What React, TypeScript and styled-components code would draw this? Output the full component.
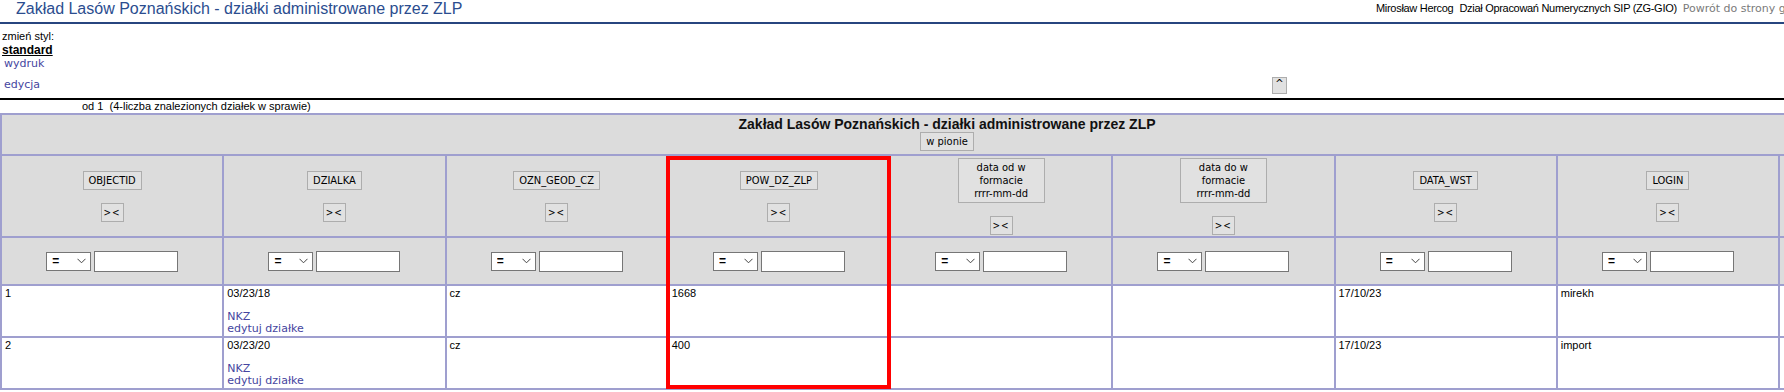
import React from "react";
import styled, { createGlobalStyle } from "styled-components";

const GlobalStyle = createGlobalStyle`
  html, body {
    margin: 0;
    padding: 0;
    overflow: hidden;
    background: #fff;
  }
  body {
    font-family: "Liberation Sans", Arial, sans-serif;
    font-size: 11px;
    color: #000;
  }
`;

type Column = { label: string[]; width: number; empty?: boolean };

const columns: Column[] = [
  { label: ["OBJECTID"], width: 222.25 },
  { label: ["DZIALKA"], width: 222.25 },
  { label: ["OZN_GEOD_CZ"], width: 222.25 },
  { label: ["POW_DZ_ZLP"], width: 222.25 },
  { label: ["data od w", "formacie", "rrrr-mm-dd"], width: 222.25 },
  { label: ["data do w", "formacie", "rrrr-mm-dd"], width: 222.25 },
  { label: ["DATA_WST"], width: 222.25 },
  { label: ["LOGIN"], width: 222.25 },
  { label: [""], width: 114, empty: true },
];

type Row = {
  id: string;
  date: string;
  geod: string;
  area: string;
  created: string;
  login: string;
};

const rows: Row[] = [
  { id: "1", date: "03/23/18", geod: "cz", area: "1668", created: "17/10/23", login: "mirekh" },
  { id: "2", date: "03/23/20", geod: "cz", area: "400", created: "17/10/23", login: "import" },
];

export default function App() {
  return (
    <Page>
      <GlobalStyle />
      <Header>
        <Title>Zakład Lasów Poznańskich - działki administrowane przez ZLP</Title>
        <UserBar>
          <span>Mirosław Hercog</span>
          <span>Dział Opracowań Numerycznych SIP (ZG-GIO)</span>
          <HomeLink href="#">Powrót do strony głównej</HomeLink>
        </UserBar>
      </Header>

      <StylePanel>
        <div>zmień styl:</div>
        <CurrentStyle>standard</CurrentStyle>
        <StyleLink href="#">wydruk</StyleLink>
        <EditRow>
          <StyleLink href="#">edycja</StyleLink>
          <CollapseButton>^</CollapseButton>
        </EditRow>
      </StylePanel>

      <Divider />
      <Count>od 1&nbsp; (4-liczba znalezionych działek w sprawie)</Count>

      <TableWrap>
        <Table>
          <colgroup>
            {columns.map((c, i) => (
              <col key={i} style={{ width: c.width }} />
            ))}
          </colgroup>
          <tbody>
            <tr>
              <TitleCell colSpan={columns.length}>
                <TableHeading>Zakład Lasów Poznańskich - działki administrowane przez ZLP</TableHeading>
                <ColumnButton>w pionie</ColumnButton>
              </TitleCell>
            </tr>
            <tr>
              {columns.map((c, i) => (
                <HeadCell key={i}>
                  {!c.empty && (
                    <HeadStack>
                      <ColumnButton $wide={c.label.length > 1}>
                        {c.label.map((line, j) => (
                          <ButtonLine key={j}>{line}</ButtonLine>
                        ))}
                      </ColumnButton>
                      <SortButton>&gt;&lt;</SortButton>
                    </HeadStack>
                  )}
                </HeadCell>
              ))}
            </tr>
            <tr>
              {columns.map((c, i) => (
                <FilterCell key={i}>
                  {!c.empty && (
                    <FilterGroup>
                      <SelectBox>
                        <Select defaultValue="=">
                          <option value="=">=</option>
                          <option value="<">&lt;</option>
                          <option value=">">&gt;</option>
                        </Select>
                        <svg width="9" height="6" viewBox="0 0 9 6">
                          <polyline points="0.5,0.8 4.5,4.8 8.5,0.8" fill="none" stroke="#444" strokeWidth="1" />
                        </svg>
                      </SelectBox>
                      <TextInput type="text" />
                    </FilterGroup>
                  )}
                </FilterCell>
              ))}
            </tr>
            {rows.map((r) => (
              <tr key={r.id}>
                <DataCell>{r.id}</DataCell>
                <DataCell>
                  <div>{r.date}</div>
                  <Blank />
                  <CellLink href="#">NKZ</CellLink>
                  <CellLink href="#">edytuj działke</CellLink>
                </DataCell>
                <DataCell>{r.geod}</DataCell>
                <DataCell>{r.area}</DataCell>
                <DataCell />
                <DataCell />
                <DataCell>{r.created}</DataCell>
                <DataCell>{r.login}</DataCell>
                <DataCell />
              </tr>
            ))}
          </tbody>
        </Table>
        <Highlight />
      </TableWrap>
    </Page>
  );
}

const Page = styled.div`
  width: 1892px;
`;

const Header = styled.div`
  display: grid;
  grid-template-columns: 1376px auto;
  height: 22px;
  border-bottom: 2px solid #27457f;
`;

const Title = styled.h1`
  margin: 0;
  padding: 1px 0 0 16px;
  font: 400 16px/16px "Liberation Sans", Arial, sans-serif;
  color: #2b4d8f;
  white-space: nowrap;
`;

const UserBar = styled.div`
  display: flex;
  gap: 6px;
  padding-top: 2px;
  font: 11px/13px "Liberation Sans", Arial, sans-serif;
  letter-spacing: -0.3px;
  white-space: nowrap;
`;

const HomeLink = styled.a`
  font-family: "DejaVu Sans", Verdana, sans-serif;
  color: #7a7a7a;
  letter-spacing: 0;
  text-decoration: none;
`;

const StylePanel = styled.div`
  padding: 5px 2px 0;
  line-height: 14px;
`;

const CurrentStyle = styled.div`
  font-weight: bold;
  font-size: 12px;
  text-decoration: underline;
`;

const StyleLink = styled.a`
  display: block;
  padding-left: 2px;
  font-family: "DejaVu Sans", Verdana, sans-serif;
  font-size: 11px;
  color: #4545a0;
  text-decoration: none;
`;

const EditRow = styled.div`
  display: flex;
  align-items: center;
  width: 1285px;
  height: 20px;
  margin-top: 4px;
`;

const CollapseButton = styled.button`
  margin-left: auto;
  width: 15px;
  height: 17px;
  padding: 0 0 2px;
  background: #e1e1e1;
  border: 1px solid #adadad;
  font: 10px/10px "DejaVu Sans", sans-serif;
  color: #000;
`;

const Divider = styled.div`
  margin-top: 3px;
  border-top: 2px solid #000;
`;

const Count = styled.div`
  padding-left: 82px;
  line-height: 13px;
  white-space: pre;
`;

const TableWrap = styled.div`
  position: relative;
`;

const Table = styled.table`
  width: 1892px;
  table-layout: fixed;
  border-collapse: collapse;

  td {
    border: 2px solid #9f9fcf;
  }
`;

const TitleCell = styled.td`
  background: #dcdcdc;
  text-align: center;
  vertical-align: top;
  padding: 1px 0 3px;
`;

const TableHeading = styled.div`
  font: bold 14px/16px "Liberation Sans", Arial, sans-serif;
  color: #111;
`;

const HeadCell = styled.td`
  background: #dcdcdc;
  text-align: center;
  vertical-align: middle;
  height: 78px;
  padding: 1px 0;
`;

const HeadStack = styled.div`
  display: flex;
  flex-direction: column;
  align-items: center;
  gap: 13px;
`;

const ColumnButton = styled.button<{ $wide?: boolean }>`
  width: ${(p) => (p.$wide ? "87px" : "auto")};
  padding: 2px 5px;
  background: #e1e1e1;
  border: 1px solid #adadad;
  font: 11px/13px "DejaVu Sans Condensed", "DejaVu Sans", sans-serif;
  color: #000;
  white-space: nowrap;
`;

const ButtonLine = styled.span`
  display: block;
`;

const SortButton = styled.button`
  width: 23px;
  height: 19px;
  padding: 0;
  background: #e1e1e1;
  border: 1px solid #adadad;
  font: 10px/13px "DejaVu Sans Condensed", sans-serif;
  letter-spacing: 1px;
  color: #000;
`;

const FilterCell = styled.td`
  background: #dcdcdc;
  text-align: center;
  vertical-align: middle;
  height: 46px;
  padding: 0;
`;

const FilterGroup = styled.div`
  display: inline-flex;
  align-items: center;
  gap: 3px;
`;

const SelectBox = styled.div`
  display: flex;
  align-items: center;
  box-sizing: border-box;
  width: 45px;
  height: 19px;
  padding: 0 4px 0 5px;
  background: #fff;
  border: 1px solid #767676;
`;

const Select = styled.select`
  flex: 1;
  min-width: 0;
  padding: 0;
  border: 0;
  background: transparent;
  appearance: none;
  font: bold 12px "Liberation Sans", Arial, sans-serif;
  color: #000;
  outline: none;
`;

const TextInput = styled.input`
  box-sizing: border-box;
  width: 84px;
  height: 21px;
  padding: 0 2px;
  background: #fff;
  border: 1px solid #767676;
`;

const DataCell = styled.td`
  background: #fff;
  vertical-align: top;
  padding: 1px 3px 0;
  font: 11px/12px "Liberation Sans", Arial, sans-serif;
  height: 49px;
`;

const Blank = styled.div`
  height: 12px;
`;

const CellLink = styled.a`
  display: block;
  font: 11px/12px "DejaVu Sans", Verdana, sans-serif;
  color: #4545a0;
  text-decoration: none;
`;

const Highlight = styled.div`
  position: absolute;
  top: 43px;
  left: 666px;
  width: 225px;
  height: 233px;
  box-sizing: border-box;
  border: 4px solid #ff0000;
  pointer-events: none;
`;
